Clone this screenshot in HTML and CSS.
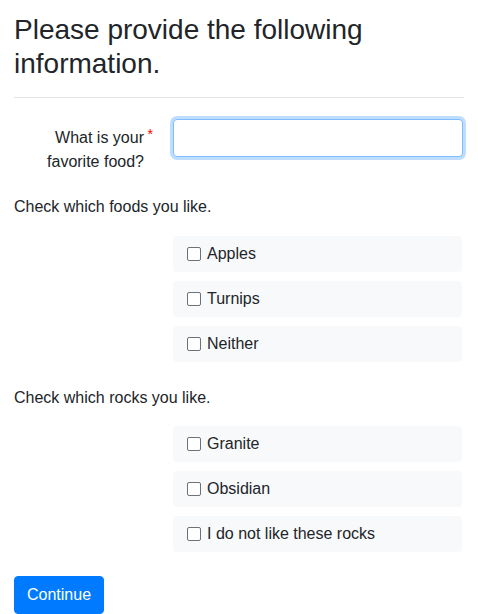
FILE: index.html
```html
<!DOCTYPE html>
<html lang="en">
<head>
<meta charset="utf-8">
<title>Form</title>
<link rel="stylesheet" href="styles.css">
</head>
<body>
<div class="container">
  <h3 class="title">Please provide the following information.</h3>
  <hr class="divider">
  <form class="form">
    <div class="row">
      <label class="row-label" for="food">What is your favorite food?<span class="req">*</span></label>
      <input class="text-input" id="food" type="text" autofocus>
    </div>
    <p class="question first">Check which foods you like.</p>
    <div class="group">
      <label class="check"><input type="checkbox" class="box"><span>Apples</span></label>
      <label class="check"><input type="checkbox" class="box"><span>Turnips</span></label>
      <label class="check"><input type="checkbox" class="box"><span>Neither</span></label>
    </div>
    <p class="question">Check which rocks you like.</p>
    <div class="group">
      <label class="check"><input type="checkbox" class="box"><span>Granite</span></label>
      <label class="check"><input type="checkbox" class="box"><span>Obsidian</span></label>
      <label class="check"><input type="checkbox" class="box"><span>I do not like these rocks</span></label>
    </div>
    <button type="button" class="btn">Continue</button>
  </form>
</div>
</body>
</html>
```

FILE: styles.css
```css
html, body {
  margin: 0;
  padding: 0;
  background: #fff;
}
body {
  font-family: "Liberation Sans", Arial, sans-serif;
  font-size: 16px;
  line-height: 24px;
  color: #212529;
}
.container {
  padding: 13px 14px 0 14px;
}
.title {
  margin: 0;
  font-size: 28px;
  line-height: 33.6px;
  font-weight: 400;
  color: #212529;
  padding-right: 60px;
}
.divider {
  margin: 17px 0 21px 0;
  border: 0;
  border-top: 1px solid rgba(0, 0, 0, 0.1);
  height: 0;
}
.form {
  display: flex;
  flex-direction: column;
  align-items: stretch;
}
.row {
  display: grid;
  grid-template-columns: 145px 1fr;
  column-gap: 14px;
  align-items: start;
}
.row-label {
  position: relative;
  text-align: right;
  padding: 7px 15px 0 20px;
}
.req {
  position: absolute;
  right: 6px;
  top: 3px;
  color: #ff0000;
  font-size: 14px;
}
.text-input {
  box-sizing: border-box;
  height: 38px;
  margin: 0 1px 0 0;
  padding: 6px 12px;
  font: inherit;
  color: #495057;
  background: #fff;
  border: 1px solid #80bdff;
  border-radius: 4px;
  outline: 0;
  box-shadow: 0 0 0 3px rgba(0, 123, 255, 0.25);
}
.question {
  margin: 0 0 16px 0;
}
.question.first {
  margin-top: 21px;
  margin-bottom: 17px;
}
.group {
  display: flex;
  flex-direction: column;
  gap: 9px;
  margin: 0 2px 24px 159px;
}
.check {
  display: flex;
  align-items: center;
  gap: 6px;
  height: 36px;
  box-sizing: border-box;
  padding: 0 14px;
  background: #f8f9fa;
  border-radius: 4px;
}
.box {
  appearance: none;
  -webkit-appearance: none;
  box-sizing: border-box;
  width: 14px;
  height: 14px;
  margin: 0;
  flex: none;
  background: #fff;
  border: 1.5px solid #6c7178;
  border-radius: 2px;
}
.btn {
  align-self: flex-start;
  box-sizing: border-box;
  height: 38px;
  padding: 6px 12px;
  font: inherit;
  color: #fff;
  background: #007bff;
  border: 1px solid #007bff;
  border-radius: 4px;
}
```
